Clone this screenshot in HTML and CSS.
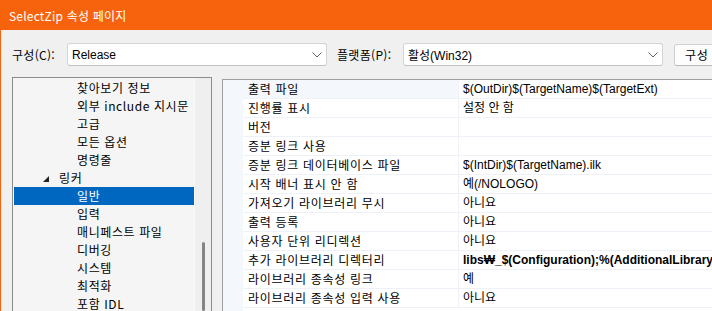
FILE: index.html
```html
<!DOCTYPE html>
<html lang="ko">
<head>
<meta charset="utf-8">
<title>SelectZip 속성 페이지</title>
<link rel="stylesheet" href="styles.css">
</head>
<body>
<div class="window">
  <div class="titlebar">SelectZip 속성 페이지</div>
  <div class="content">
    <div class="toolbar">
      <span class="label">구성(C):</span>
      <div class="combo combo-config"><span>Release</span><svg class="chev" width="10" height="6" viewBox="0 0 10 6"><path d="M0.5 0.5 L5 5 L9.5 0.5" fill="none" stroke="#606060" stroke-width="1"/></svg></div>
      <span class="label label-platform">플랫폼(P):</span>
      <div class="combo combo-platform"><span>활성(Win32)</span><svg class="chev" width="10" height="6" viewBox="0 0 10 6"><path d="M0.5 0.5 L5 5 L9.5 0.5" fill="none" stroke="#606060" stroke-width="1"/></svg></div>
      <div class="button">구성 관리자</div>
    </div>
    <div class="panes">
      <div class="tree">
        <div class="tree-items">
          <div class="node lvl2">찾아보기 정보</div>
          <div class="node lvl2">외부 include 지시문</div>
          <div class="node lvl2">고급</div>
          <div class="node lvl2">모든 옵션</div>
          <div class="node lvl2">명령줄</div>
          <div class="node lvl1"><span class="tri"></span>링커</div>
          <div class="node lvl2 selected">일반</div>
          <div class="node lvl2">입력</div>
          <div class="node lvl2">매니페스트 파일</div>
          <div class="node lvl2">디버깅</div>
          <div class="node lvl2">시스템</div>
          <div class="node lvl2">최적화</div>
          <div class="node lvl2">포함 IDL</div>
        </div>
        <div class="vscroll"><div class="thumb"></div></div>
      </div>
      <div class="grid">
        <div class="gutter"></div>
        <div class="rows">
          <div class="row current"><div class="name">출력 파일</div><div class="value">$(OutDir)$(TargetName)$(TargetExt)</div></div>
          <div class="row"><div class="name">진행률 표시</div><div class="value">설정 안 함</div></div>
          <div class="row"><div class="name">버전</div><div class="value"></div></div>
          <div class="row"><div class="name">증분 링크 사용</div><div class="value"></div></div>
          <div class="row"><div class="name">증분 링크 데이터베이스 파일</div><div class="value">$(IntDir)$(TargetName).ilk</div></div>
          <div class="row"><div class="name">시작 배너 표시 안 함</div><div class="value">예(/NOLOGO)</div></div>
          <div class="row"><div class="name">가져오기 라이브러리 무시</div><div class="value">아니요</div></div>
          <div class="row"><div class="name">출력 등록</div><div class="value">아니요</div></div>
          <div class="row"><div class="name">사용자 단위 리디렉션</div><div class="value">아니요</div></div>
          <div class="row"><div class="name">추가 라이브러리 디렉터리</div><div class="value bold">libs₩_$(Configuration);%(AdditionalLibraryD</div></div>
          <div class="row"><div class="name">라이브러리 종속성 링크</div><div class="value">예</div></div>
          <div class="row"><div class="name">라이브러리 종속성 입력 사용</div><div class="value">아니요</div></div>
        </div>
      </div>
    </div>
  </div>
</div>
</body>
</html>
```

FILE: styles.css
```css
* { box-sizing: border-box; }
html, body {
  margin: 0;
  padding: 0;
  width: 712px;
  height: 311px;
  overflow: hidden;
  background: #f0f0f0;
  font-family: "Noto Sans CJK KR", "Noto Sans", sans-serif;
  font-size: 12px;
  color: #000;
}
.window {
  width: 712px;
  height: 311px;
  display: flex;
  flex-direction: column;
  border-left: 1px solid #f7630c;
  overflow: hidden;
}
.titlebar {
  height: 30px;
  flex: none;
  background: #f7630c;
  color: #fff;
  display: flex;
  align-items: center;
  padding-left: 9px;
  font-size: 12px;
  letter-spacing: 0.2px;
  margin-left: -1px;
}
.content {
  flex: 1;
  display: flex;
  flex-direction: column;
  min-height: 0;
}
.toolbar {
  height: 47px;
  flex: none;
  display: flex;
  align-items: center;
  padding: 2px 0 0 11px;
  white-space: nowrap;
  overflow: hidden;
}
.label { width: 55px; flex: none; letter-spacing: 0.3px; }
.label-platform { width: 66px; margin-left: 10px; }
.combo {
  flex: none;
  height: 23px;
  background: #fff;
  border: 1px solid #d4d4d4;
  border-bottom-color: #c2c2c2;
  border-radius: 3px;
  display: flex;
  align-items: center;
  justify-content: space-between;
  padding: 0 4px 0 4px;
  font-family: "Liberation Sans", "Noto Sans CJK KR", sans-serif;
}
.combo-config { width: 260px; }
.combo-platform { width: 260px; }
.button {
  flex: none;
  margin-left: 11px;
  height: 22px;
  padding: 0 10px;
  background: #fdfdfd;
  border: 1px solid #d0d0d0;
  border-bottom-color: #b8b8b8;
  border-radius: 3px;
  display: flex;
  align-items: center;
  letter-spacing: 0.6px;
}
.panes {
  flex: 1;
  display: flex;
  padding-left: 11px;
  min-height: 0;
  gap: 10px;
}
.tree {
  width: 200px;
  flex: none;
  border: 1px solid #8c8c8c;
  border-bottom: none;
  background: #f5f5f5;
  display: flex;
  overflow: hidden;
}
.tree-items {
  flex: 1;
  padding: 1px 0 0 1px;
  min-width: 0;
}
.node {
  height: 18px;
  line-height: 18px;
  white-space: nowrap;
  display: flex;
  align-items: center;
  letter-spacing: 0.6px;
}
.lvl2 { padding-left: 63px; }
.lvl1 { padding-left: 29px; }
.selected { background: #0067c0; color: #fff; }
.tri {
  width: 0;
  height: 0;
  border-left: 6px solid transparent;
  border-bottom: 6px solid #222;
  margin-right: 10px;
  margin-top: 2px;
}
.vscroll {
  width: 17px;
  flex: none;
  background: #efefef;
  border-left: 1px solid #f8f8f8;
  display: flex;
  justify-content: center;
  padding-top: 164px;
}
.thumb {
  width: 3px;
  background: #858585;
  border-radius: 2px;
}
.grid {
  flex: 1;
  margin-top: 2px;
  border: 1px solid #a0a0a0;
  border-right: none;
  border-bottom: none;
  background: #fff;
  display: flex;
  min-width: 0;
  overflow: hidden;
}
.gutter {
  width: 20px;
  flex: none;
  background: #f4f7fc;
}
.rows { flex: 1; min-width: 0; }
.row {
  height: 19px;
  display: flex;
  border-bottom: 1px solid #eef2f8;
}
.row .name {
  width: 216px;
  flex: none;
  padding-left: 5px;
  line-height: 18px;
  white-space: nowrap;
  letter-spacing: 0.7px;
  border-right: 1px solid #eef2f8;
}
.row.current .name { background: #f4f7fc; }
.row .value {
  flex: 1;
  padding-left: 4px;
  line-height: 18px;
  white-space: nowrap;
  overflow: hidden;
  font-family: "Liberation Sans", "Noto Sans CJK KR", sans-serif;
}
.value.bold { font-weight: bold; }
```
